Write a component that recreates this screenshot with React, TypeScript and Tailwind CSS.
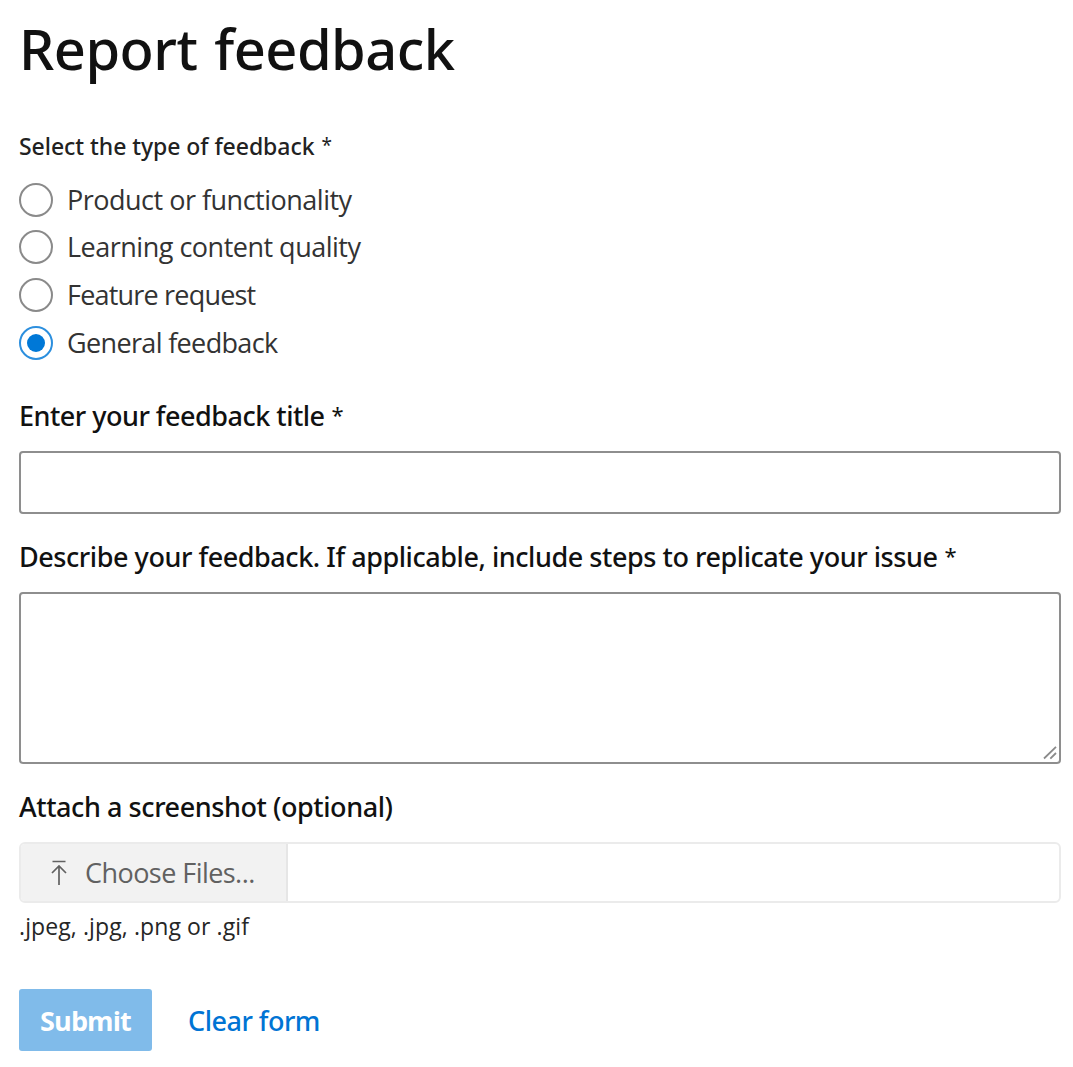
import React, { useState } from "react";

const feedbackTypes = [
  { name: "Product or functionality", tracking: "tracking-[-0.5px]" },
  { name: "Learning content quality", tracking: "tracking-[-0.5px]" },
  { name: "Feature request", tracking: "tracking-[-0.8px]" },
  { name: "General feedback", tracking: "tracking-[-0.65px]" },
];

interface FieldLabelProps {
  htmlFor: string;
  text: string;
  required?: boolean;
  className?: string;
}

const FieldLabel: React.FC<FieldLabelProps> = ({ htmlFor, text, required, className }) => (
  <label
    htmlFor={htmlFor}
    className="flex h-9 items-center pt-0.5 whitespace-nowrap text-[27px] leading-9 font-medium"
  >
    <span className={className}>{text}</span>
    {required && <span className="ml-[7px] pb-1 text-[22px] leading-8 font-normal">*</span>}
  </label>
);

const App: React.FC = () => {
  const [selected, setSelected] = useState("General feedback");

  return (
    <form className="h-[1067px] w-[1073px] overflow-hidden bg-white pt-4 pl-[19px] pr-3 font-['Noto_Sans','Open_Sans',sans-serif] text-[#111]">
      <h1 className="h-16 text-[56px] leading-16 font-medium whitespace-nowrap">
        <span className="tracking-[-0.55px] [word-spacing:3px]">Report feedback</span>
      </h1>

      <fieldset className="mt-[50px]">
        <legend className="flex h-8 items-center text-[23px] leading-8 font-medium whitespace-nowrap text-[#222]">
          <span className="tracking-[-0.05px]">Select the type of feedback</span>
          <span className="ml-[7px] pb-0.5 text-[19px] leading-7 font-normal">*</span>
        </legend>
        <div className="mt-[20.5px] flex flex-col gap-[13.8px]">
          {feedbackTypes.map(({ name, tracking }) => (
            <label key={name} className="flex h-[34px] items-center gap-3.5">
              <input
                type="radio"
                name="type"
                checked={selected === name}
                onChange={() => setSelected(name)}
                className="grid size-[34px] shrink-0 appearance-none place-items-center rounded-full border-2 border-[#8a8a8a] bg-white before:size-[18px] before:rounded-full checked:border-[#2c8fde] checked:before:bg-[#0078d7]"
              />
              <span
                className={`font-['Open_Sans'] text-[27px] leading-8 whitespace-nowrap text-[#333] ${tracking}`}
              >
                {name}
              </span>
            </label>
          ))}
        </div>
      </fieldset>

      <div className="mt-[37.5px]">
        <FieldLabel htmlFor="title" text="Enter your feedback title" required className="tracking-[-0.5px]" />
        <input
          id="title"
          type="text"
          className="mt-[18px] block h-[63px] w-full rounded-[4px] border-2 border-[#8e8e8e] px-4"
        />
      </div>

      <div className="mt-6">
        <FieldLabel
          htmlFor="description"
          text="Describe your feedback. If applicable, include steps to replicate your issue"
          required
          className="tracking-[-0.445px]"
        />
        <div className="relative mt-[18px]">
          <textarea
            id="description"
            className="block h-[172px] w-full resize-none rounded-[4px] border-2 border-[#8e8e8e] p-4"
          />
          {/* resize grip */}
          <svg
            viewBox="0 0 14 14"
            className="absolute right-1 bottom-1 size-3.5"
            fill="none"
            stroke="#8a8a8a"
            strokeWidth="1.8"
          >
            <path d="M1 12.5 13 0.8M7.3 12.7 13 7" />
          </svg>
        </div>
      </div>

      <div className="mt-6">
        <FieldLabel htmlFor="files" text="Attach a screenshot (optional)" className="tracking-[-0.43px]" />
        <div
          id="files"
          className="mt-[18px] flex h-[61px] w-full overflow-hidden rounded-[6px] border-2 border-[#ebebeb]"
        >
          <div className="flex w-[267px] items-center border-r-2 border-[#e6e6e6] bg-[#f2f2f2] pl-[30px] text-[#616161]">
            <svg
              viewBox="0 0 16 26"
              className="h-[26px] w-4 shrink-0"
              fill="none"
              stroke="#616161"
              strokeWidth="1.7"
            >
              <path d="M1.5 1.5h13M8 25V6M1 13l7-7 7 7" />
            </svg>
            <span className="ml-[18px] font-['Open_Sans'] text-[27px] leading-8 tracking-[-0.55px] whitespace-nowrap">
              Choose Files...
            </span>
          </div>
        </div>
        <p className="mt-[7px] h-8 font-['Open_Sans'] text-[23px] leading-8 whitespace-nowrap text-[#262626]">
          <span className="tracking-[0.1px]">.jpeg, .jpg, .png or .gif</span>
        </p>
      </div>

      <div className="mt-[47px] flex h-[62px] items-center">
        <button
          type="button"
          className="h-[62px] w-[133px] rounded-[3px] bg-[#80bbea] pt-0.5 font-['Open_Sans'] text-[27px] font-bold text-white"
        >
          <span className="tracking-[-0.9px]">Submit</span>
        </button>
        <button type="reset" className="ml-9 pt-0.5 text-[27px] font-medium whitespace-nowrap text-[#0074d4]">
          <span className="tracking-[-0.5px]">Clear form</span>
        </button>
      </div>
    </form>
  );
};

export default App;
